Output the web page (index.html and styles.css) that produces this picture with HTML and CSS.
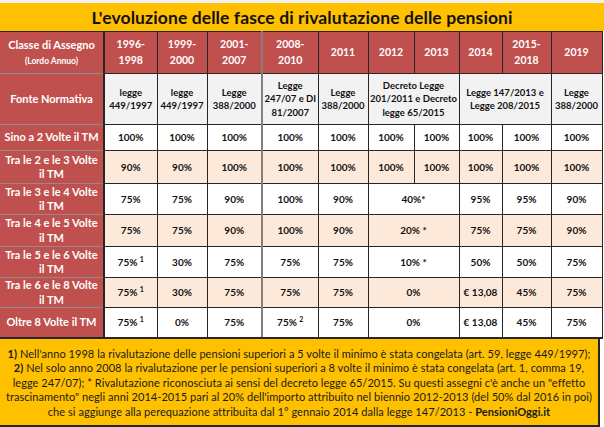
FILE: index.html
```html
<!DOCTYPE html>
<html lang="it">
<head>
<meta charset="utf-8">
<title>L'evoluzione delle fasce di rivalutazione delle pensioni</title>
<link rel="stylesheet" href="styles.css">
</head>
<body>
<div class="sheet">
  <div class="strip"></div>
  <div class="title">L'evoluzione delle fasce di rivalutazione delle pensioni</div>
  <table class="grid">
    <colgroup>
      <col class="w104"><col class="w53"><col class="w50"><col class="w55"><col class="w56"><col class="w50"><col class="w46"><col class="w45"><col class="w43"><col class="w49"><col class="w51">
    </colgroup>
    <tr class="r-head">
      <th class="lab">Classe di Assegno<br><span class="small">(Lordo Annuo)</span></th>
      <th>1996-<br>1998</th>
      <th>1999-<br>2000</th>
      <th>2001-<br>2007</th>
      <th class="sep">2008-<br>2010</th>
      <th>2011</th>
      <th>2012</th>
      <th>2013</th>
      <th>2014</th>
      <th>2015-<br>2018</th>
      <th>2019</th>
    </tr>
    <tr class="r-fonte">
      <th class="lab">Fonte Normativa</th>
      <td>legge<br>449/1997</td>
      <td>legge<br>449/1997</td>
      <td>Legge<br>388/2000</td>
      <td class="sep">Legge<br>247/07 e DI<br>81/2007</td>
      <td>Legge<br>388/2000</td>
      <td colspan="2">Decreto Legge<br>201/2011 e Decreto<br>legge 65/2015</td>
      <td colspan="2">Legge 147/2013 e<br>Legge 208/2015</td>
      <td>Legge<br>388/2000</td>
    </tr>
    <tr class="r-data h26">
      <th class="lab">Sino a 2 Volte il TM</th>
      <td>100%</td><td>100%</td><td>100%</td><td class="sep">100%</td><td>100%</td><td>100%</td><td>100%</td><td>100%</td><td>100%</td><td>100%</td>
    </tr>
    <tr class="r-data alt h33">
      <th class="lab">Tra le 2 e le 3 Volte<br>il TM</th>
      <td>90%</td><td>90%</td><td>100%</td><td class="sep">100%</td><td>100%</td><td>100%</td><td>100%</td><td>100%</td><td>100%</td><td>100%</td>
    </tr>
    <tr class="r-data h31">
      <th class="lab">Tra le 3 e le 4 Volte<br>il TM</th>
      <td>75%</td><td>75%</td><td>90%</td><td class="sep">100%</td><td>90%</td><td colspan="2">40%*</td><td>95%</td><td>95%</td><td>90%</td>
    </tr>
    <tr class="r-data alt h32">
      <th class="lab">Tra le 4 e le 5 Volte<br>il TM</th>
      <td>75%</td><td>75%</td><td>90%</td><td class="sep">100%</td><td>90%</td><td colspan="2">20% *</td><td>75%</td><td>75%</td><td>90%</td>
    </tr>
    <tr class="r-data h31">
      <th class="lab">Tra le 5 e le 6 Volte<br>il TM</th>
      <td>75% <sup>1</sup></td><td>30%</td><td>75%</td><td class="sep">75%</td><td>75%</td><td colspan="2">10% *</td><td>50%</td><td>50%</td><td>75%</td>
    </tr>
    <tr class="r-data alt h30">
      <th class="lab">Tra le 6 e le 8 Volte<br>il TM</th>
      <td>75% <sup>1</sup></td><td>30%</td><td>75%</td><td class="sep">75%</td><td>75%</td><td colspan="2">0%</td><td>€ 13,08</td><td>45%</td><td>75%</td>
    </tr>
    <tr class="r-data h30">
      <th class="lab">Oltre 8 Volte il TM</th>
      <td>75% <sup>1</sup></td><td>0%</td><td>75%</td><td class="sep">75% <sup>2</sup></td><td>75%</td><td colspan="2">0%</td><td>€ 13,08</td><td>45%</td><td>75%</td>
    </tr>
  </table>
  <div class="note">
    <p><b>1)</b> Nell'anno 1998 la rivalutazione delle pensioni superiori a 5 volte il minimo è stata congelata (art. 59, legge 449/1997);</p>
    <p><b>2)</b> Nel solo anno 2008 la rivalutazione per le pensioni superiori a 8 volte il minimo è stata congelata (art. 1, comma 19,</p>
    <p>legge 247/07); * Rivalutazione riconosciuta ai sensi del decreto legge 65/2015. Su questi assegni c'è anche un "effetto</p>
    <p>trascinamento" negli anni 2014-2015 pari al 20% dell'importo attribuito nel biennio 2012-2013 (del 50% dal 2016 in poi)</p>
    <p>che si aggiunge alla perequazione attribuita dal 1° gennaio 2014 dalla legge 147/2013 - <b>PensioniOggi.it</b></p>
  </div>
</div>
</body>
</html>
```

FILE: styles.css
```css
html, body {
  margin: 0;
  padding: 0;
  background: #ffffff;
}

body {
  font-family: Lato, "Open Sans", "Liberation Sans", sans-serif;
  color: #111111;
}

.sheet {
  width: 604px;
}

.strip {
  height: 3px;
  background: #f3f3f3;
}

.title {
  height: 28px;
  background: #ffc000;
  color: #111111;
  font-size: 17.5px;
  font-weight: 700;
  letter-spacing: 0.1px;
  display: flex;
  align-items: center;
  justify-content: center;
}

.grid {
  width: 602px;
  border-collapse: collapse;
  table-layout: fixed;
}

.w104 { width: 104px; }
.w53 { width: 53px; }
.w50 { width: 50px; }
.w55 { width: 55px; }
.w56 { width: 56px; }
.w46 { width: 46px; }
.w45 { width: 45px; }
.w43 { width: 43px; }
.w49 { width: 49px; }
.w51 { width: 51px; }

.grid th,
.grid td {
  padding: 0;
  text-align: center;
  vertical-align: middle;
  border: 1px solid #262626;
  font-weight: 700;
  line-height: 1.3;
}

.grid th {
  background: #c0504d;
  color: #ffffff;
  font-size: 10.5px;
}

.grid th.lab {
  border-left: 0;
  border-right: 2px solid #262626;
  font-size: 11px;
  line-height: 1.3;
  border-top-color: #8c8c8c;
  border-bottom-color: #8c8c8c;
}

.r-head th {
  height: 41px;
  border-top: 1px solid #262626;
  line-height: 1.45;
}

.r-head th.lab {
  border-top-color: #262626;
}

.small {
  font-size: 8.5px;
}

.r-fonte th,
.r-fonte td {
  height: 50px;
}

.r-fonte td {
  background: #f2f2f2;
  font-size: 9.5px;
  line-height: 1.4;
  color: #111111;
}

.r-data td {
  font-size: 10px;
  color: #111111;
  background: #ffffff;
}

.r-data.alt td {
  background: #fde9d9;
}

.grid .sep {
  border-left: 2px solid #808080;
}

.h26 th, .h26 td { height: 25px; }
.h33 th, .h33 td { height: 32px; }
.h32 th, .h32 td { height: 31px; }
.h31 th, .h31 td { height: 30px; }
.h30 th, .h30 td { height: 29px; }

.grid sup {
  font-size: 7px;
  line-height: 0;
  vertical-align: 4px;
}

.grid tr:last-child th,
.grid tr:last-child td {
  border-bottom: 2px solid #262626;
}

.note {
  box-sizing: border-box;
  width: 600px;
  height: 88px;
  background: #ffc000;
  border-right: 2px solid #262626;
  border-bottom: 2px solid #262626;
  padding-top: 2px;
  font-size: 11px;
  letter-spacing: 0.05px;
  line-height: 14.5px;
  color: #1a1a1a;
  text-align: center;
  white-space: nowrap;
  display: flex;
  flex-direction: column;
  justify-content: center;
}

.note p {
  margin: 0;
}

.note b {
  font-weight: 700;
}
```
